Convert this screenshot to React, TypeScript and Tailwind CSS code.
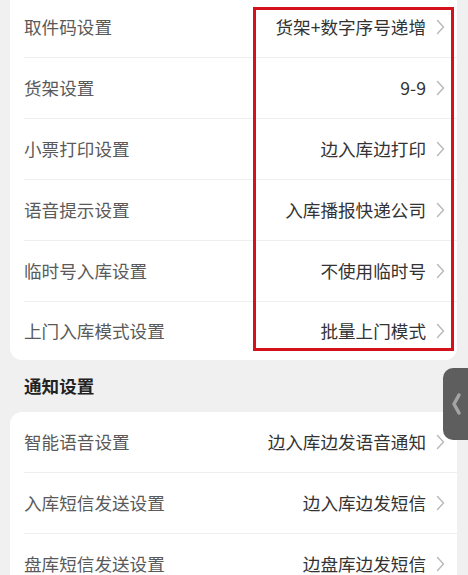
import React from "react";

const storeRows = [
  { label: "取件码设置", value: "货架+数字序号递增" },
  { label: "货架设置", value: "9-9" },
  { label: "小票打印设置", value: "边入库边打印" },
  { label: "语音提示设置", value: "入库播报快递公司" },
  { label: "临时号入库设置", value: "不使用临时号" },
  { label: "上门入库模式设置", value: "批量上门模式" },
];

const noticeRows = [
  { label: "智能语音设置", value: "边入库边发语音通知" },
  { label: "入库短信发送设置", value: "边入库边发短信" },
  { label: "盘库短信发送设置", value: "边盘库边发短信" },
];

const Chevron = () => (
  <svg width="9" height="16" viewBox="0 0 9 16" fill="none" className="ml-[10px] shrink-0">
    <path d="M1.5 1.5 L7.5 8 L1.5 14.5" stroke="#b8b8b8" strokeWidth="1.4" strokeLinecap="round" strokeLinejoin="round" />
  </svg>
);

const Row = ({ label, value, last }: { label: string; value: string; last?: boolean }) => (
  <div className="pl-[14px]">
    <div
      className={`flex items-center justify-between pr-[12px] ${last ? "h-[58px]" : "h-[61px] border-b border-[#efefef]"}`}
    >
      <span className="text-[17.6px] text-[#5a5a5a]">{label}</span>
      <div className="flex items-center">
        <span className="text-[17.6px] text-[#333333]">{value}</span>
        <Chevron />
      </div>
    </div>
  </div>
);

export default function App() {
  return (
    <div
      className="relative h-[575px] overflow-hidden bg-[#f0f0f0]"
      style={{ fontFamily: '"Noto Sans CJK SC", "Noto Sans", sans-serif' }}
    >
      <div className="mx-[10px] mt-[-3px] w-[447px] bg-white rounded-b-[12px]">
        {storeRows.map((r, i) => (
          <Row key={r.label} label={r.label} value={r.value} last={i === storeRows.length - 1} />
        ))}
      </div>

      <div className="h-[52px] flex items-center pl-[24px]">
        <span className="text-[17.6px] font-bold text-[#222222]">通知设置</span>
      </div>

      <div className="mx-[10px] w-[447px] bg-white rounded-t-[12px]">
        {noticeRows.map((r) => (
          <Row key={r.label} label={r.label} value={r.value} />
        ))}
      </div>

      {/* red highlight box */}
      <div className="absolute left-[253px] top-[7px] w-[201px] h-[344px] border-[3px] border-[#d3121c]" />

      {/* side handle */}
      <div className="absolute right-0 top-[368px] w-[25px] h-[72px] bg-[#5e5e5e] rounded-l-[10px] flex items-center justify-center">
        <svg width="12" height="24" viewBox="0 0 12 24" fill="none">
          <path d="M9 3 L4 12 L9 21" stroke="#a4a4a4" strokeWidth="3.5" strokeLinecap="round" strokeLinejoin="round" />
        </svg>
      </div>
    </div>
  );
}
